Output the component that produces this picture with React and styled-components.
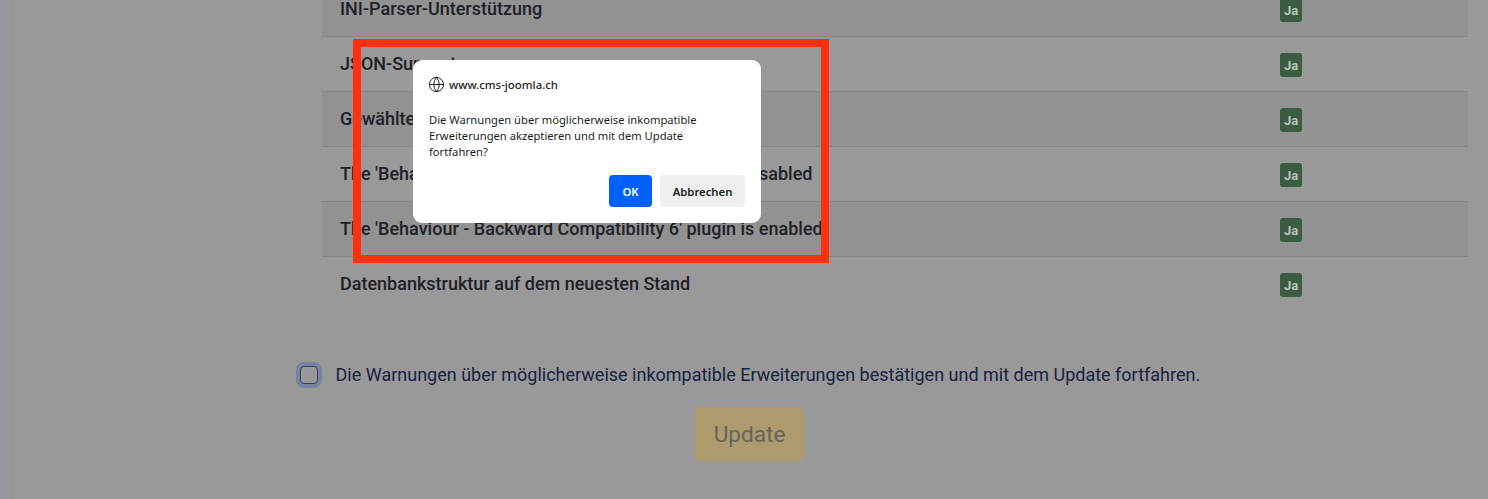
import React from "react";
import styled, { createGlobalStyle } from "styled-components";
import { Globe } from "lucide-react";

const GlobalStyle = createGlobalStyle`
  html, body {
    margin: 0;
    padding: 0;
    height: 100%;
    overflow: hidden;
    background: #99999a;
    font-family: Roboto, "Liberation Sans", sans-serif;
  }
`;

const Page = styled.div`
  display: flex;
  width: 1488px;
  height: 499px;
  overflow: hidden;
`;

const Sidebar = styled.div`
  width: 12px;
  flex-shrink: 0;
  background: #97979f;
  border-right: 1px solid #929296;
`;

const Content = styled.main`
  flex: 1;
  display: flex;
  flex-direction: column;
  padding-right: 20px;
`;

const Table = styled.div`
  margin: -18px 0 0 309px;
`;

const Row = styled.div`
  display: flex;
  align-items: center;
  height: 54px;
  padding-left: 18px;
  border-bottom: 1px solid ${(p) => (p.$last ? "transparent" : "#858586")};
  background: ${(p) => (p.$striped ? "#929293" : "transparent")};
`;

const RowLabel = styled.span`
  flex: 1;
  padding-bottom: 2px;
  font-size: 18px;
  font-weight: 500;
  color: #202126;
  white-space: nowrap;
`;

const Badge = styled.span`
  display: flex;
  align-items: center;
  justify-content: center;
  width: 22px;
  height: 24px;
  margin: 2px 166px 0 0;
  border-radius: 3px;
  background: #3a5c42;
  color: #b9c4ba;
  font-size: 13px;
  font-weight: 700;
`;

const ConfirmRow = styled.label`
  display: flex;
  align-items: center;
  gap: 17.5px;
  margin: 52px 0 0 287px;
  font-size: 18px;
  color: #18213f;
  white-space: nowrap;
`;

const CheckBox = styled.span`
  box-sizing: border-box;
  width: 18px;
  height: 18px;
  border: 1px solid #33415f;
  border-radius: 4px;
  background: #98989b;
  box-shadow: 0 0 0 4px #78849f;
`;

const UpdateRow = styled.div`
  display: flex;
  justify-content: flex-start;
  margin: 22px 0 0 682px;
`;

const UpdateButton = styled.button`
  width: 109px;
  height: 54px;
  border: none;
  border-radius: 5px;
  background: #ad9b6e;
  color: #68645a;
  font-family: inherit;
  font-size: 22.6px;
`;

const Highlight = styled.div`
  position: absolute;
  left: 353px;
  top: 39px;
  box-sizing: border-box;
  width: 476px;
  height: 224px;
  border: 8px solid #ff3010;
`;

const Dialog = styled.div`
  position: absolute;
  left: 413px;
  top: 60px;
  box-sizing: border-box;
  width: 348px;
  height: 163px;
  padding: 16px;
  border-radius: 9px;
  background: #fff;
  font-family: "Noto Sans", "Open Sans", sans-serif;
  color: #1d1d1d;
`;

const Origin = styled.div`
  display: flex;
  align-items: center;
  gap: 4px;
  height: 18px;
  margin: -1px 0 0 -1px;
  font-size: 11.4px;
  font-weight: 500;
`;

const Message = styled.p`
  width: 290px;
  margin: 19px 0 0;
  font-size: 11.2px;
  line-height: 16px;
`;

const Actions = styled.div`
  display: flex;
  justify-content: flex-end;
  gap: 8px;
  margin-top: 15px;
`;

const DialogButton = styled.button`
  height: 32px;
  padding: 0;
  width: ${(p) => (p.$primary ? "43px" : "85px")};
  border: none;
  border-radius: 4px;
  background: ${(p) => (p.$primary ? "#0060fb" : "#efefef")};
  color: ${(p) => (p.$primary ? "#fff" : "#1d1d1d")};
  font-family: inherit;
  font-size: 11.3px;
  font-weight: 600;
`;

const rows = [
  "INI-Parser-Unterstützung",
  "JSON-Support",
  "Gewählter Datenbanktreiber",
  "The 'Behaviour - Backward Compatibility' plugin is disabled",
  "The 'Behaviour - Backward Compatibility 6' plugin is enabled",
  "Datenbankstruktur auf dem neuesten Stand",
];

export default function App() {
  return (
    <>
      <GlobalStyle />
      <Page>
        <Sidebar />
        <Content>
          <Table>
            {rows.map((label, i) => (
              <Row key={label} $striped={i % 2 === 0} $last={i === rows.length - 1}>
                <RowLabel>{label}</RowLabel>
                <Badge>Ja</Badge>
              </Row>
            ))}
          </Table>
          <ConfirmRow>
            <CheckBox />
            Die Warnungen über möglicherweise inkompatible Erweiterungen bestätigen und mit dem Update fortfahren.
          </ConfirmRow>
          <UpdateRow>
            <UpdateButton>Update</UpdateButton>
          </UpdateRow>
        </Content>
      </Page>
      <Highlight />
      <Dialog>
        <Origin>
          <Globe size={17} strokeWidth={1.4} color="#1d1d1d" />
          www.cms-joomla.ch
        </Origin>
        <Message>
          Die Warnungen über möglicherweise inkompatible Erweiterungen akzeptieren und mit dem Update fortfahren?
        </Message>
        <Actions>
          <DialogButton $primary>OK</DialogButton>
          <DialogButton>Abbrechen</DialogButton>
        </Actions>
      </Dialog>
    </>
  );
}
